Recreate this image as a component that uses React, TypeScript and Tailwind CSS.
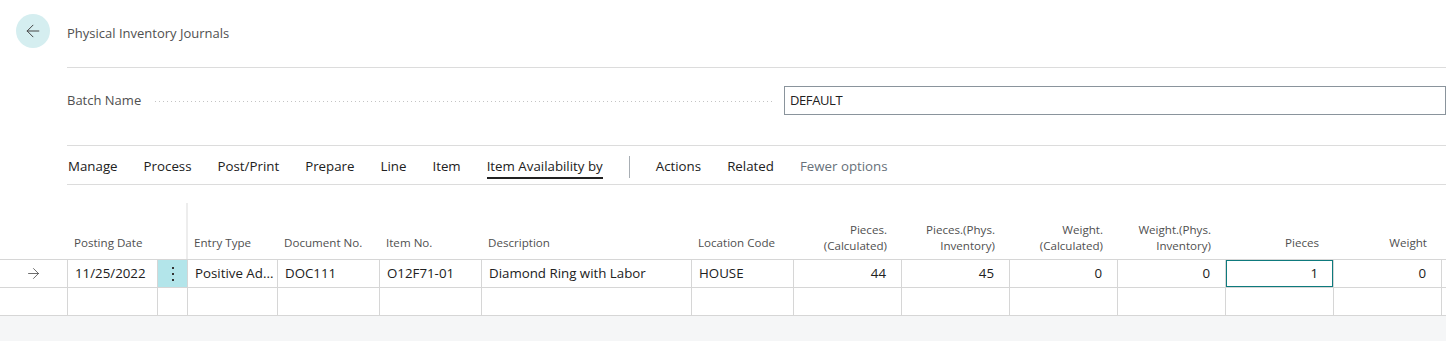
import { ArrowLeft, ArrowRight } from "lucide-react";

const actions = [
  "Manage",
  "Process",
  "Post/Print",
  "Prepare",
  "Line",
  "Item",
];

type Col = {
  w: string;
  label: string[];
  right?: boolean;
};

const cols: Col[] = [
  { w: "w-[90px]", label: ["Posting Date"] },
  { w: "w-[30px]", label: [] },
  { w: "w-[90px]", label: ["Entry Type"] },
  { w: "w-[102px]", label: ["Document No."] },
  { w: "w-[102px]", label: ["Item No."] },
  { w: "w-[210px]", label: ["Description"] },
  { w: "w-[102px]", label: ["Location Code"] },
  { w: "w-[108px]", label: ["Pieces.", "(Calculated)"], right: true },
  { w: "w-[108px]", label: ["Pieces.(Phys.", "Inventory)"], right: true },
  { w: "w-[108px]", label: ["Weight.", "(Calculated)"], right: true },
  { w: "w-[108px]", label: ["Weight.(Phys.", "Inventory)"], right: true },
  { w: "w-[108px]", label: ["Pieces"], right: true },
  { w: "w-[108px]", label: ["Weight"], right: true },
];

const row = [
  "11/25/2022",
  "",
  "Positive Ad...",
  "DOC111",
  "O12F71-01",
  "Diamond Ring with Labor",
  "HOUSE",
  "44",
  "45",
  "0",
  "0",
  "1",
  "0",
];

export default function App() {
  return (
    <div className="min-h-screen flex flex-col bg-white text-[#212121] font-['Open_Sans',sans-serif]">
      {/* Title */}
      <div className="flex items-center mt-[14px] h-[34px]">
        <button className="ml-[16px] w-[34px] h-[34px] rounded-full bg-[#d5eef0] flex items-center justify-center text-[#444]">
          <ArrowLeft className="w-[20px] h-[20px]" strokeWidth={1.2} />
        </button>
        <span className="ml-[17px] pt-[5px] text-[13px] text-[#505050]">
          Physical Inventory Journals
        </span>
      </div>

      <div className="ml-[67px] mt-[19px] border-t border-[#dcdcdc]" />

      {/* Batch name */}
      <div className="flex items-center mt-[18px] h-[29px]">
        <div className="w-[784px] pl-[67px] flex items-center">
          <span className="text-[13px] text-[#505050]">Batch Name</span>
          <div className="flex-1 ml-[14px] mr-[9px] mt-[2px] h-px bg-[linear-gradient(to_right,#c4c4c4_1px,transparent_1px)] bg-[length:4px_1px] bg-repeat-x" />
        </div>
        <div className="flex-1 h-[29px] border border-[#8a949c] flex items-center pl-[5px] text-[13px] tracking-[-0.4px]">
          DEFAULT
        </div>
      </div>

      <div className="ml-[67px] mt-[30px] border-t border-[#dcdcdc]" />

      {/* Action bar */}
      <div className="ml-[68px] h-[38px] flex items-center gap-[26px] text-[13.3px] pt-[4px]">
        {actions.map((a) => (
          <span key={a}>{a}</span>
        ))}
        <span className="relative">
          Item Availability by
          <span className="absolute left-0 right-0 -bottom-[2px] h-[2px] bg-[#212121]" />
        </span>
        <span className="w-px h-[22px] bg-[#a8aeb4]" />
        <span>Actions</span>
        <span>Related</span>
        <span className="text-[#68717a]">Fewer options</span>
      </div>

      <div className="ml-[67px] border-t border-[#dcdcdc]" />

      {/* Table header */}
      <div className="flex h-[74px] text-[11.6px] text-[#505050] leading-[16px]">
        <div className="w-[68px]" />
        {cols.map((c, i) =>
          i === 1 ? (
            <div key={i} className={`${c.w} flex flex-col pt-[18px]`}>
              <div className="flex-1 border-r-2 border-[#ededed]" />
            </div>
          ) : (
            <div
              key={i}
              className={`${c.w} flex flex-col justify-end ${
                c.label.length > 1 ? "pb-[5px]" : "pb-[8px]"
              } ${c.right ? "items-end pr-[15px]" : "pl-[6px]"}`}
            >
              {c.label.map((l) => (
                <span key={l} className="whitespace-nowrap">
                  {l}
                </span>
              ))}
            </div>
          )
        )}
      </div>

      {/* Rows */}
      <div className="border-t border-[#d6d6d6] text-[13.3px]">
        <div className="flex h-[28px] border-b border-[#d6d6d6]">
          <div className="w-[68px] border-r border-[#d6d6d6] flex items-center justify-center text-[#444]">
            <ArrowRight className="w-[17px] h-[17px]" strokeWidth={1.1} />
          </div>
          {cols.map((c, i) => {
            if (i === 1)
              return (
                <div
                  key={i}
                  className={`${c.w} border-r border-[#d6d6d6] bg-[#b3e5ea] flex items-center justify-center`}
                >
                  <span className="flex flex-col gap-[4px]">
                    <span className="w-[2px] h-[2px] bg-[#333]" />
                    <span className="w-[2px] h-[2px] bg-[#333]" />
                    <span className="w-[2px] h-[2px] bg-[#333]" />
                  </span>
                </div>
              );
            if (i === 11)
              return (
                <div key={i} className={`${c.w} border-r border-[#d6d6d6]`}>
                  <div className="h-full border border-[#0e7a7d] flex items-center justify-end pr-[14px]">
                    {row[i]}
                  </div>
                </div>
              );
            return (
              <div
                key={i}
                className={`${c.w} border-r border-[#d6d6d6] flex items-center whitespace-nowrap overflow-hidden ${
                  c.right ? "justify-end pr-[15px]" : "pl-[7px]"
                }`}
              >
                {row[i]}
              </div>
            );
          })}
          <div className="flex-1" />
        </div>
        <div className="flex h-[28px] border-b border-[#d6d6d6]">
          <div className="w-[68px] border-r border-[#d6d6d6]" />
          {cols.map((c, i) => (
            <div key={i} className={`${c.w} border-r border-[#d6d6d6]`} />
          ))}
          <div className="flex-1" />
        </div>
      </div>

      <div className="flex-1 bg-[#f5f6f7]" />
    </div>
  );
}
